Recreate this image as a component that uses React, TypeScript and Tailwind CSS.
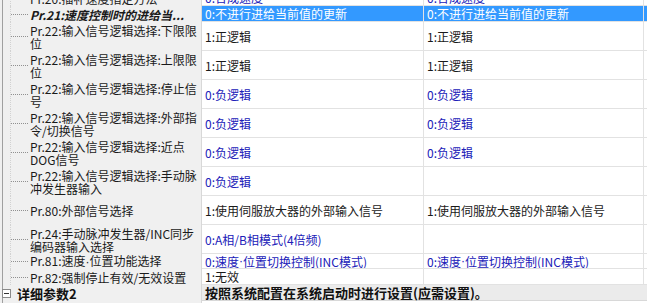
import React from "react";

type Row = {
  label: string[];
  v2?: string;
  v3?: string;
  blue?: boolean;
  h: string;
  selected?: boolean;
};

const ROWS: Row[] = [
  { label: ["Pr.20:插补速度指定方法"], v2: "0:合成速度", v3: "0:合成速度", blue: true, h: "h-[16px]" },
  { label: ["Pr.21:速度控制时的进给当..."], v2: "0:不进行进给当前值的更新", v3: "0:不进行进给当前值的更新", h: "h-[16px]", selected: true },
  { label: ["Pr.22:输入信号逻辑选择:下限限", "位"], v2: "1:正逻辑", v3: "1:正逻辑", h: "h-[29px]" },
  { label: ["Pr.22:输入信号逻辑选择:上限限", "位"], v2: "1:正逻辑", v3: "1:正逻辑", h: "h-[29px]" },
  { label: ["Pr.22:输入信号逻辑选择:停止信", "号"], v2: "0:负逻辑", v3: "0:负逻辑", blue: true, h: "h-[29px]" },
  { label: ["Pr.22:输入信号逻辑选择:外部指", "令/切换信号"], v2: "0:负逻辑", v3: "0:负逻辑", blue: true, h: "h-[29px]" },
  { label: ["Pr.22:输入信号逻辑选择:近点", "DOG信号"], v2: "0:负逻辑", v3: "0:负逻辑", blue: true, h: "h-[29px]" },
  { label: ["Pr.22:输入信号逻辑选择:手动脉", "冲发生器输入"], v2: "0:负逻辑", blue: true, h: "h-[29px]" },
  { label: ["Pr.80:外部信号选择"], v2: "1:使用伺服放大器的外部输入信号", v3: "1:使用伺服放大器的外部输入信号", h: "h-[29px]" },
  { label: ["Pr.24:手动脉冲发生器/INC同步", "编码器输入选择"], v2: "0:A相/B相模式(4倍频)", blue: true, h: "h-[29px]" },
  { label: ["Pr.81:速度·位置功能选择"], v2: "0:速度·位置切换控制(INC模式)", v3: "0:速度·位置切换控制(INC模式)", blue: true, h: "h-[15px]" },
  { label: ["Pr.82:强制停止有效/无效设置"], v2: "1:无效", h: "h-[16px]" },
];

// the middle dot should be narrow (latin), not full-width CJK
function Txt({ s }: { s: string }) {
  const parts = s.split("·");
  return (
    <>
      {parts.map((p, i) => (
        <React.Fragment key={i}>
          {i > 0 && <span className="font-['Liberation_Sans',sans-serif]">·</span>}
          {p}
        </React.Fragment>
      ))}
    </>
  );
}

function ValueCell({ text, blue, selected, w }: { text?: string; blue?: boolean; selected?: boolean; w: string }) {
  return (
    <div
      className={`${w} flex shrink-0 items-center border-r border-b border-[#e2e2e2] pl-[3px] whitespace-nowrap overflow-hidden ${
        selected ? "bg-[#3399ff] text-white" : blue ? "bg-white text-[#2020b8]" : "bg-white text-[#1a1a1a]"
      }`}
    >
      {text && <Txt s={text} />}
    </div>
  );
}

export default function App() {
  return (
    <div className="h-[303px] w-[647px] overflow-hidden bg-[#f0f0f0] font-['Noto_Sans_CJK_SC','Noto_Sans',sans-serif] text-[12px] leading-[13px]">
      <div className="-mt-[10px] ml-[2px] flex flex-col border-l border-[#a0a0a0]">
        {ROWS.map((row, i) => (
          <div key={i} className={`flex ${row.h}`}>
            {/* tree column */}
            <div className="flex w-[199px] shrink-0 items-stretch border-r border-[#d8d8d8] bg-[#f0f0f0]">
              <div className="ml-[7px] flex w-[18px] items-center border-l border-dotted border-[#d2d2d2]">
                <div className="h-0 w-full border-t border-dotted border-[#909090]" />
              </div>
              <div
                className={`flex flex-col justify-center pl-[2px] whitespace-nowrap text-[#1a1a1a] ${
                  row.selected ? "font-bold italic" : ""
                }`}
              >
                {row.label.map((l) => (
                  <span key={l}>
                    <Txt s={l} />
                  </span>
                ))}
              </div>
            </div>
            <ValueCell w="w-[222px]" text={row.v2} blue={row.blue} selected={row.selected} />
            <ValueCell w="w-[220px]" text={row.v3} blue={row.blue} selected={row.selected} />
            <div className={`flex-1 border-b border-[#e2e2e2] ${row.selected ? "bg-[#3399ff]" : "bg-white"}`} />
          </div>
        ))}

        {/* group header */}
        <div className="flex h-[16px] text-[13px] font-bold text-[#111]">
          <div className="flex w-[199px] shrink-0 items-center border-r border-[#d8d8d8] bg-[#f0f0f0]">
            <div className="-ml-[1px] flex h-[9px] w-[9px] items-center justify-center border border-[#8a8a8a] bg-white">
              <div className="h-px w-[5px] bg-[#333]" />
            </div>
            <span className="ml-[6px]">详细参数2</span>
          </div>
          <div className="flex flex-1 items-center border-b border-[#d8d8d8] bg-[#ebebeb] pl-[3px] whitespace-nowrap">
            按照系统配置在系统启动时进行设置(应需设置)。
          </div>
        </div>

        <div className="flex h-[16px]">
          <div className="w-[199px] shrink-0 border-r border-[#d8d8d8] bg-[#f0f0f0]" />
          <div className="flex-1 bg-white" />
        </div>
      </div>
    </div>
  );
}
